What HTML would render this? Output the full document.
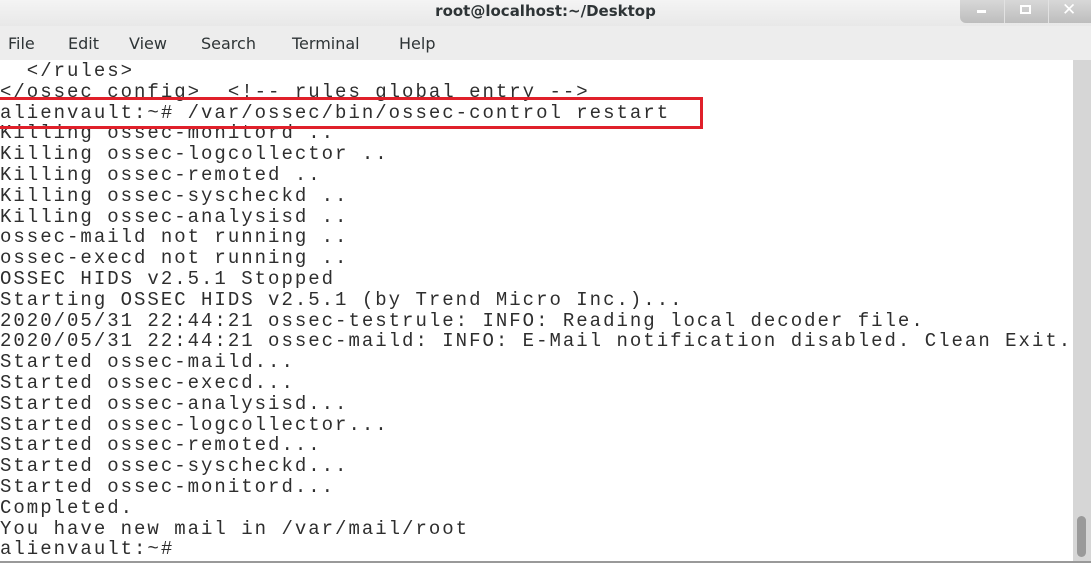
<!DOCTYPE html>
<html><head><style>
html,body{margin:0;padding:0;width:1091px;height:563px;overflow:hidden;background:#fff;position:relative;font-family:"DejaVu Sans",sans-serif}
#title{position:absolute;left:0;top:0;width:1091px;height:26px;background:linear-gradient(#f4f4f4,#e8e8e8);text-align:center;font-weight:bold;font-size:15px;line-height:22px;color:#2e3436}
#btns{position:absolute;left:960px;top:0;width:131px;height:23px;background:linear-gradient(#d8d8d8,#bdbdbd);border-radius:0 0 0 6px}
#btns div{position:absolute;top:0;width:1px;height:23px;background:#e2e2e2}
#menu{position:absolute;left:0;top:26px;width:1091px;height:34px;background:#ededed;font-size:16px;color:#2e3436}
#menu span{position:absolute;top:8px}
#term{position:absolute;left:0;top:61px;width:1073px;height:500px;background:#fff}
pre{margin:0;position:absolute;left:0;top:0;font-family:"Liberation Mono",monospace;font-size:19px;letter-spacing:2px;line-height:20.8px;color:#2e2e2e}
#box{position:absolute;left:0;top:97px;width:700px;height:26px;border:3px solid #e0202a;border-left:none}
#sb{position:absolute;left:1073px;top:60px;width:18px;height:501px;background:#d6d6d6}
#thumb{position:absolute;left:1077px;top:516px;width:9px;height:41px;background:#9a9a9a;border-radius:5px}
#bot{position:absolute;left:0;top:561px;width:1091px;height:2px;background:#999}
</style></head><body>
<div id="title">root@localhost:~/Desktop</div>
<div id="btns"><div style="left:44px"></div><div style="left:88px"></div>
<span style="position:absolute;left:17px;top:10px;width:9px;height:3px;background:#fff"></span>
<span style="position:absolute;left:60px;top:5px;width:7px;height:5px;border:2px solid #fff"></span>
<span style="position:absolute;left:102px;top:0px;color:#fff;font-weight:bold;font-size:17px">✕</span></div>
<div id="menu"><span style="left:8px">File</span><span style="left:68px">Edit</span><span style="left:129px">View</span><span style="left:201px">Search</span><span style="left:292px">Terminal</span><span style="left:399px">Help</span></div>
<div id="term"><pre>  &lt;/rules&gt;
&lt;/ossec_config&gt;  &lt;!-- rules global entry --&gt;
alienvault:~# /var/ossec/bin/ossec-control restart
Killing ossec-monitord ..
Killing ossec-logcollector ..
Killing ossec-remoted ..
Killing ossec-syscheckd ..
Killing ossec-analysisd ..
ossec-maild not running ..
ossec-execd not running ..
OSSEC HIDS v2.5.1 Stopped
Starting OSSEC HIDS v2.5.1 (by Trend Micro Inc.)...
2020/05/31 22:44:21 ossec-testrule: INFO: Reading local decoder file.
2020/05/31 22:44:21 ossec-maild: INFO: E-Mail notification disabled. Clean Exit.
Started ossec-maild...
Started ossec-execd...
Started ossec-analysisd...
Started ossec-logcollector...
Started ossec-remoted...
Started ossec-syscheckd...
Started ossec-monitord...
Completed.
You have new mail in /var/mail/root
alienvault:~# </pre></div>
<div id="box"></div>
<div id="sb"></div><div id="thumb"></div>
<div id="bot"></div>
</body></html>
